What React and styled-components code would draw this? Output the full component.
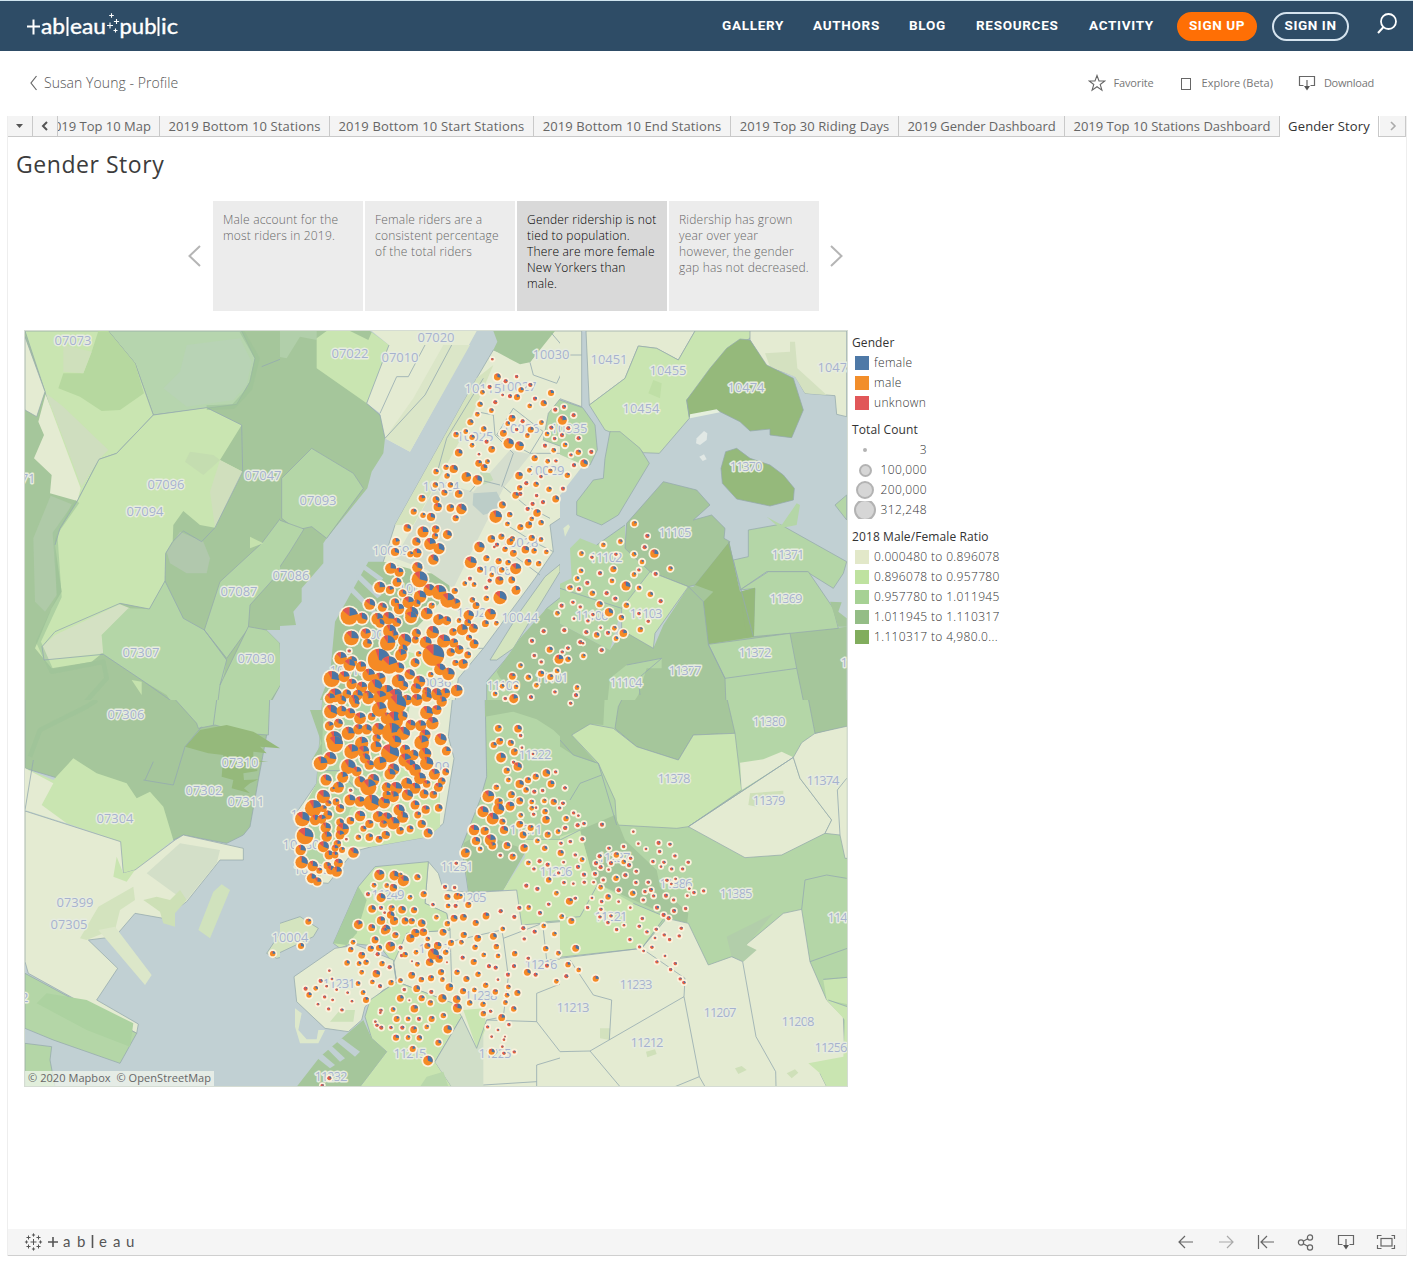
import React from "react";
import styled, { createGlobalStyle } from "styled-components";

const GlobalStyle = createGlobalStyle`
  * { box-sizing: border-box; }
  body { margin: 0; background: #fff; font-family: "Open Sans", "Noto Sans", sans-serif; color: #333; }
`;

const Page = styled.div`
  width: 1413px;
  height: 1262px;
  overflow: hidden;
  display: flex;
  flex-direction: column;
`;

const Header = styled.header`
  height: 51px;
  flex: none;
  border-top: 1px solid #cfe4ef;
  background: #2e4c66;
  display: flex;
  align-items: center;
  padding: 0 15px 0 26px;
`;

const Logo = styled.div`
  display: flex;
  align-items: center;
  height: 30px;
  margin-right: auto;
  svg { display: block; }
`;

const Nav = styled.nav`
  display: flex;
  align-items: center;
  gap: 30px;
  padding-bottom: 2px;
`;

const NavLink = styled.a`
  width: ${(p) => p.$w}px;
  color: #fff;
  font: 700 13.5px/20px Roboto, sans-serif;
  letter-spacing: 0.7px;
  white-space: nowrap;
`;

const Pill = styled.a`
  width: ${(p) => p.$w}px;
  height: 29px;
  margin-left: ${(p) => p.$gap}px;
  border-radius: 15px;
  border: 2px solid ${(p) => (p.$filled ? "#ff6f05" : "#d5e3ee")};
  background: ${(p) => (p.$filled ? "#ff6f05" : "transparent")};
  color: #fff;
  font: 700 13.5px/22px Roboto, sans-serif;
  letter-spacing: 0.6px;
  text-align: center;
  white-space: nowrap;
`;

const SearchButton = styled.span`
  display: flex;
  margin: -5px 0 0 27px;
`;

const CrumbRow = styled.div`
  height: 65px;
  flex: none;
  display: flex;
  align-items: center;
  padding: 0 39px 2px 29px;
  color: #555;
`;

const BackLink = styled.a`
  display: flex;
  align-items: center;
  gap: 6px;
  margin-right: auto;
  font: 300 14px/20px "Open Sans", sans-serif;
  letter-spacing: 0.06px;
`;

const Action = styled.a`
  display: flex;
  align-items: center;
  gap: 7px;
  margin-left: ${(p) => p.$gap ?? 0}px;
  font: 400 11px/20px "Open Sans", sans-serif;
  letter-spacing: ${(p) => p.$ls ?? 0}px;
  white-space: nowrap;
  color: #777;
`;

const Workbook = styled.main`
  width: 1400px;
  height: 1140px;
  margin-left: 7px;
  flex: none;
  border: solid #eee;
  border-width: 0 1px;
  display: flex;
  flex-direction: column;
`;

const TabStrip = styled.div`
  height: 21px;
  flex: none;
  display: flex;
  background: #f4f4f4;
`;

const TabButton = styled.div`
  width: ${(p) => p.$w}px;
  display: flex;
  align-items: center;
  justify-content: center;
  border: solid #c9c9c9;
  border-width: 0 1px 1px 0;
`;

const Tab = styled.div`
  width: ${(p) => p.$w}px;
  height: 21px;
  overflow: hidden;
  display: flex;
  justify-content: ${(p) => (p.$clip ? "flex-end" : "center")};
  padding-right: ${(p) => (p.$clip ? 8 : 0)}px;
  font: 400 13px/21px "Open Sans", sans-serif;
  letter-spacing: ${(p) => p.$ls ?? 0}px;
  white-space: nowrap;
  color: ${(p) => (p.$active ? "#333" : "#666")};
  background: ${(p) => (p.$active ? "#fff" : "#f4f4f4")};
  border: solid #c9c9c9;
  border-width: 0 1px ${(p) => (p.$active ? 0 : 1)}px 0;
`;

const TabGap = styled.div`
  width: 1px;
  background: #fff;
  border-bottom: 1px solid #c9c9c9;
`;

const Title = styled.h1`
  margin: 9px 0 1px 8px;
  font: 400 23px/36px "Open Sans", sans-serif;
  letter-spacing: 0.55px;
  color: #3c3c3c;
`;

const Story = styled.div`
  display: flex;
  align-items: center;
  margin: 18px 0 0 180px;
  height: 110px;
  flex: none;
`;

const Points = styled.div`
  display: flex;
  gap: 2px;
  margin: 0 11px 0 12px;
`;

const StoryPoint = styled.div`
  width: 150px;
  height: 110px;
  padding: 11px 0 0 10px;
  background: ${(p) => (p.$active ? "#d9d9d9" : "#ececec")};
  color: ${(p) => (p.$active ? "#000" : "#686868")};
  font: 300 12px/16px "Open Sans", sans-serif;
  letter-spacing: 0.2px;
  white-space: pre;
`;

const Dashboard = styled.div`
  display: flex;
  margin: 19px 0 0 16px;
`;

const MapPane = styled.div`
  width: 824px;
  height: 757px;
  position: relative;
  svg { display: block; }
`;

const Attribution = styled.div`
  position: absolute;
  left: 1px;
  bottom: 1px;
  height: 15px;
  padding: 0 3px;
  background: rgba(240, 245, 236, 0.75);
  font: 400 11px/14px "Open Sans", sans-serif;
  letter-spacing: 0.06px;
  color: #666;
  white-space: pre;
`;

const Legends = styled.aside`
  width: 170px;
  padding: 3px 0 0 4px;
  font: 350 12px/20px "Open Sans", sans-serif;
  color: #333;
`;

const Legend = styled.section`
  margin-bottom: 7px;
`;

const LegendTitle = styled.div`
  height: 20px;
  font-weight: 400;
  letter-spacing: 0.1px;
  color: #333;
  white-space: nowrap;
`;

const LegendRow = styled.div`
  height: 20px;
  display: flex;
  align-items: center;
  gap: 5px;
  padding-left: 3px;
  letter-spacing: 0.34px;
  white-space: nowrap;
`;

const Swatch = styled.i`
  width: 14px;
  height: 14px;
  background: ${(p) => p.$c};
`;

const SizeRow = styled.div`
  height: 20px;
  width: 75px;
  display: flex;
  align-items: center;
  justify-content: space-between;
  padding-left: 2px;
  letter-spacing: 0.4px;
`;

const SizeBox = styled.div`
  width: 22px;
  height: 18px;
  overflow: hidden;
  display: flex;
  align-items: center;
  justify-content: center;
`;

const SizeDot = styled.i`
  flex: none;
  width: ${(p) => p.$d}px;
  height: ${(p) => p.$d}px;
  border-radius: 50%;
  border: 2px solid #b3b3b3;
  background: #d6d6d6;
`;

const Footer = styled.footer`
  height: 27px;
  flex: none;
  margin-top: auto;
  background: #f5f5f5;
  border-bottom: 1px solid #cfcfcf;
  display: flex;
  align-items: center;
  padding: 0 10px 1px 16px;
`;

const FooterBrand = styled.div`
  display: flex;
  align-items: center;
  margin-right: auto;
`;

const Tools = styled.div`
  display: flex;
  gap: 20px;
`;

const CREAM = "#e4ebd2";
const LIGHT = "#c9e5b1";
const MID = "#b4d6a7";
const DARK = "#a5c69b";
const DEEP = "#95b97b";
const WATER = "#c1d0d3";
const GREY = "#d3dfc8";

// Each tile of the map: origin, size, base fill and shapes [fill, points, outlined].
const TILES = [
  { x: 20, y: 325, w: 280, base: DARK, shapes: [
    ["#b6d5ae", "265,18 665,18 705,100 690,170 650,238 400,270 345,115", 1],
    ["#b8d3b5", "500,60 660,40 695,110 680,180 640,225 500,245 430,190 480,140"],
    [LIGHT, "15,18 265,18 345,115 400,270 290,385 237,403 172,528 75,200", 1],
    ["#b6d89f", "115,190 130,145 190,145 215,80 235,18 265,18 345,115 372,205 300,255 245,258 180,215"],
    ["#cfe0bc", "130,60 215,80 190,145 130,140"],
    ["#cfdebf", "78,205 130,245 265,375 237,403 185,485"],
    [CREAM, "15,35 75,200 50,275 15,255", 1],
    [CREAM, "77,208 182,490 172,528 90,505 95,450 42,400 72,330 55,290"],
    ["#afcaa8", "92,512 155,538 105,640 110,810 75,860 45,830 40,640"],
    [LIGHT, "400,270 560,248 665,300 600,405 668,440 585,608 540,600 490,558 460,600 458,650 437,685 435,768 388,852 300,835 240,990 215,1010 95,1030 45,970 95,850 125,800 105,660 120,610 172,528 237,403 290,385"],
    ["#d0dfbd", "600,405 668,440 585,608 570,500"],
    ["#c4ddb0", "510,380 580,390 600,405 550,450 495,410"],
    ["#d4e1c3", "105,930 300,838 330,850 245,930 250,985 72,1005 66,965"],
    [MID, "435,768 490,880 553,915 620,1005 585,1170 500,1170 440,1110 365,1065 250,988 245,930 325,850 388,852"],
    [MID, "785,575 840,605 840,640 690,840 685,910 620,1000 553,915 600,770 725,655", 1],
    [MID, "840,420 782,480 785,575 840,605", 1],
    [MID, "685,905 740,915 780,955 785,1075 745,1140 745,1170 585,1170 600,1080", 1],
    [WATER, "840,830 790,880 825,905 780,915 740,915 780,955 785,1075 750,1140 750,1170 840,1170"],
    ["#b1c8ad", "440,680 480,620 550,650 570,700 560,745 500,745 450,715"],
    ["#c5e2ad", "690,635 730,655 690,670"],
    ["#c5e2ad", "335,1065 365,1070 365,1110"],
  ], lines: ["458,650 490,618 545,650 585,608", "665,300 668,440", "400,270 290,385 237,403 172,528 120,610 105,660", "400,270 560,248 665,300", "668,440 585,608", "458,650 437,685 435,768 388,852 300,835 105,920 66,965 72,1005 250,988 365,1065 500,1160", "435,768 490,880 553,915 620,1005 600,1080", "725,125 800,95 840,60"],
    bands: ["172,530 105,625 118,815 55,950 95,1040 250,1010 260,1060 180,1150 20,1165", "665,18 712,100 690,190 640,245 560,248"] },
  { x: 280, y: 325, w: 290, base: WATER, shapes: [
    [DARK, "0,18 270,18 325,60 260,235 300,270 315,340 310,385 275,440 262,490 140,640 130,655 130,715 65,790 65,830 40,860 48,900 0,905"],
    ["#b1cfaa", "0,18 110,18 110,45 60,35 20,100 0,90"],
    [LIGHT, "110,40 140,18 210,18 265,45 275,22 327,60 260,235 110,130"],
    [CREAM, "275,18 590,18 390,380 315,340 300,265 260,235 327,60"],
    ["#dbe6c8", "490,60 570,60 390,380 315,340 400,220"],
    [MID, "95,370 220,445 250,490 140,640 95,605 50,615 5,580 5,460", 1],
    [MID, "0,575 72,612 30,680 0,770", 1],
    [CREAM, "640,75 750,110 815,18 870,18 870,540 810,600 820,680 765,760 610,970 535,1060 515,1170 140,1170 160,1000 310,710 345,600 590,160", 1],
    [DARK, "640,18 825,18 750,112 720,118 640,75 652,50"],
    ["#d5e3be", "590,160 640,120 560,310 400,600 345,600"],
    [DARK, "265,710 310,710 440,745 505,745 510,800 380,940 230,1170 130,1170 110,1150 150,1050 165,890"],
    [MID, "805,265 840,222 870,240 870,385 790,345", 1],
    ["#d5dece", "690,375 752,388 670,490 520,790 440,735 345,700 475,470 580,500"],
    ["#bccdc8", "580,505 650,500 668,535 640,560 610,570 578,540"],
    ["#c5dbb7", "600,440 630,445 640,465 610,480"],
    [LIGHT, "385,980 450,1000 480,1130 520,1050 500,1170 300,1170"],
    ["#d4e4bf", "630,1005 720,860 795,755 840,718 840,740 700,970 650,1005", 1],
    ["#dce8cc", "850,620 858,605 868,600 862,625"],
    [WATER, "200,790 215,782 290,860 280,868"],
    [WATER, "225,755 240,748 305,810 292,820"],
    [WATER, "245,730 258,722 310,760 300,770"],
    [MID, "870,770 800,850 780,880 620,1070 620,1170 870,1170", 1],
    [DARK, "870,895 800,850 720,940 650,1040 660,1060 715,1090 700,1170 870,1170"],
  ], lines: ["327,60 260,235 300,270 315,340 435,210 515,60", "435,60 385,155 350,155 300,265", "750,112 760,150 830,175 870,90", "700,250 790,320 750,385 650,330 700,250", "590,260 640,270 645,330 700,385 665,485", "570,500 600,465 660,480", "870,385 750,385", "820,680 760,650 680,600", "670,485 735,540 810,580", "700,690 780,750", "815,25 870,90", "610,970 560,970", "475,430 500,340 610,160"] },
  { x: 560, y: 325, w: 288, base: WATER, shapes: [
    [CREAM, "0,18 65,18 65,245 0,210", 1],
    [MID, "0,215 68,248 105,300 112,375 90,420 60,420 0,375", 1],
    [CREAM, "0,375 70,420 0,550"],
    [CREAM, "78,18 405,18 355,105 290,70 235,63 195,160 88,240", 1],
    [LIGHT, "235,63 290,70 355,105 405,18 575,18 570,40 500,80 380,225 388,280 298,385 250,383 200,340 135,315 88,240 195,160", 1],
    ["#bfdfa6", "280,165 305,175 300,220 265,205"],
    [CREAM, "570,18 860,18 860,275 830,268 825,212 735,205 705,152 620,125 570,45", 1],
    ["#d4e1c0", "615,85 690,80 690,50 705,50 712,130 740,155 800,210 735,205 705,155 630,125"],
    [DEEP, "540,42 570,45 620,120 700,160 730,255 695,338 630,330 630,312 570,318 540,290 470,255 388,275 380,225 450,130 500,70", 1],
    ["#e5efdd", "390,268 470,253 480,262 390,280"],
    [DEEP, "530,370 497,380 483,430 487,475 530,522 630,543 700,525 703,490 670,450 630,420 570,400", 1],
    ["#e1e8e5", "410,340 432,318 442,325 440,345 420,360 408,355"],
    ["#e1e8e5", "418,395 432,388 440,403 428,408"],
    [MID, "150,320 180,320 240,370 268,415 175,570 125,600 50,570 50,530 100,465 130,460 135,400", 1],
    [MID, "195,600 195,670 270,740 185,850 150,975 0,880 0,790 35,760 30,670 60,640 110,660"],
    [DARK, "0,880 150,975 190,915 280,970 310,900 385,785 400,785 500,655 540,800 690,925 860,905 860,1170 0,1170"],
    [DARK, "310,470 410,495 450,540 400,585 455,570 495,610 492,640 510,650 405,780 385,785 270,740 195,670 200,595", 1],
    [LIGHT, "270,740 385,785 285,925 280,970 185,915 185,850", 1],
    [DEEP, "508,650 540,800 585,790 582,935 445,958 430,830 460,800 405,780"],
    [MID, "565,615 660,598 860,710 850,745 820,790 740,740 620,740 540,795 520,705 565,695", 1],
    [MID, "620,575 665,600 710,535 720,540 710,600 660,610"],
    [MID, "540,795 625,740 745,740 820,850 835,910 690,925 580,935 585,790", 1],
    [DEEP, "540,800 585,788 582,935 560,938"],
    [MID, "445,958 690,925 710,1030 745,1170 500,1170 495,1060", 1],
    [MID, "305,1000 200,1020 150,1060 135,1170 175,1170 235,1110 260,1030 305,1030"],
    [DARK, "810,830 845,832 835,860 860,880 860,905 835,905"],
    [MID, "860,510 825,540 860,585", 1],
    ["#dce8cc", "10,610 25,598 30,605 15,635"],
  ], lines: ["385,785 430,830 445,958 495,1060 710,1030", "505,650 580,935", "200,1020 305,1000", "110,660 195,600", "0,790 185,850", "240,1110 235,1060 305,1000", "0,90 65,90"] },
  { x: 20, y: 700, w: 280, base: WATER, shapes: [
    [DARK, "15,0 580,0 740,105 715,240 690,380 670,405 620,430 490,405 460,420 400,320 15,205", 1],
    [MID, "440,0 750,0 745,105 670,100 585,75 535,85 530,70", 1],
    [DEEP, "620,75 700,95 780,145 720,140 740,160 700,155 700,180 745,185 705,185 670,205 712,208 712,213 670,220 672,240 715,238 690,250 672,265 690,280 635,265 640,240 605,230 610,165 565,160 495,140 540,90"],
    [LIGHT, "15,205 100,240 160,175 230,220 320,250 350,295 390,275 430,320 460,420 345,510 310,520 302,425 140,370 15,330"],
    [CREAM, "15,205 100,250 65,315 140,370 15,330"],
    [CREAM, "15,333 302,425 310,520 345,510 465,420 490,405 670,445 670,480 600,480 500,605 430,655 345,640 285,710 205,720 293,805 230,900 355,972 350,1000 25,820 15,785", 1],
    [LIGHT, "290,470 310,520 345,510 320,545 280,530"],
    [GREY, "380,520 480,430 600,450 590,490 500,600 470,585"],
    ["#d3e3be", "235,620 340,560 345,600 300,630 285,690 250,700 200,720 180,715"],
    ["#cde0b6", "370,600 410,590 450,600 480,570 500,600 465,640 465,680 430,670 420,635"],
    ["#dce7c9", "235,690 285,680 395,825 375,855"],
    ["#d0e2bd", "605,553 630,570 570,715 535,690 580,575"],
    [MID, "15,820 350,1000 300,1090 100,1020 15,985", 1],
    ["#acd2a0", "80,880 200,900 340,970 330,1040 200,990 50,910"],
    [MID, "15,1030 95,1040 90,1080 105,1160 15,1160", 1],
    ["#d4e4bf", "740,760 800,670 840,650 840,750 770,775", 1],
  ], lines: ["370,240 460,255 495,140 545,80", "15,330 40,180", "400,185 375,240", "590,0 580,75"],
    bands: ["30,170 60,90 200,20 230,0"] },
  { x: 280, y: 700, w: 290, base: WATER, shapes: [
    [CREAM, "130,0 520,0 505,110 522,175 490,370 445,410 275,440 220,455 145,550 85,545 55,480 55,330 110,250", 1],
    [MID, "130,0 400,0 350,200 170,450 120,530 60,500 55,350 110,250"],
    [LIGHT, "350,180 480,250 480,380 445,410 275,440 180,440 210,330"],
    [DARK, "90,30 130,30 125,190 95,180 125,130"],
    [MID, "615,0 870,0 870,420 740,420 670,570 565,575 545,440 600,300 620,230", 1],
    [DARK, "615,0 870,0 870,165 820,90 770,58 700,35 615,50"],
    [DARK, "550,430 600,400 740,450 670,570 565,575"],
    [LIGHT, "735,420 870,420 870,665 725,675 710,570 670,570 735,470"],
    [CREAM, "445,485 475,520 490,570 570,578 710,570 725,675 870,660 870,1160 520,1160 465,1080 545,920 350,845 340,780 380,700 510,690 500,640 435,610", 1],
    [LIGHT, "445,485 285,500 235,560 160,730 180,745 215,730 300,740 340,790 380,700 510,690 500,640 435,610", 1],
    ["#a9cda0", "160,730 235,560 260,600 230,700 200,735"],
    [CREAM, "165,745 230,735 340,780 350,850 310,870 255,920 245,960 205,995 135,985 50,905 42,830", 1],
    [LIGHT, "350,845 520,910 545,950 465,1085 515,1160 240,1160 320,1055 275,1015 255,950 270,900", 1],
    [DARK, "250,960 275,1015 320,1055 240,1160 50,1160 120,1070"],
    [WATER, "170,1025 185,1015 240,1055 225,1070"],
    [WATER, "140,1045 152,1035 195,1075 180,1085"],
    [WATER, "100,1065 118,1055 165,1095 150,1105"],
    ["#d0dec8", "545,950 590,1045 610,980 610,1160 515,1160 465,1085"],
    ["#b9d8ab", "420,1160 440,1130 490,1115 505,1160"],
    [LIGHT, "550,930 610,925 620,980 590,1045"],
    ["#d4e4bf", "0,680 60,650 115,685 100,710 0,772", 1],
    ["#dde8cb", "45,925 65,940 55,990 80,1018 110,1018 115,990 135,990 115,1030 60,1030 45,980"],
    ["#cde2b9", "180,930 225,930 220,965 150,965"],
  ], lines: ["665,690 670,715 800,665 870,660", "670,715 685,830 670,950 620,960 590,1045 545,950", "510,690 515,850", "665,690 510,725", "545,950 465,1085", "620,960 770,965 840,1055 870,1055", "770,965 770,880 870,840", "770,1160 770,1095 870,1065", "610,1155 770,1145", "790,690 800,780 870,775", "340,790 350,850", "110,212 180,212 230,270"] },
  { x: 560, y: 700, w: 288, base: MID, shapes: [
    [DARK, "0,0 135,0 130,75 95,72 35,105 110,190 40,165 0,120"],
    [DARK, "200,0 495,0 525,100 400,105 355,180 230,140 165,85 175,20", 1],
    [LIGHT, "90,72 160,85 230,140 355,180 400,105 525,100 545,270 385,380 350,385 170,375 165,300 115,190 35,105", 1],
    [CREAM, "540,188 610,178 665,155 700,172 545,270"],
    [CREAM, "700,172 720,235 815,360 795,400 665,465 555,473 385,380", 1],
    [CREAM, "700,172 725,128 765,100 862,75 862,475 855,475 840,405 795,400 815,360 720,235", 1],
    [DARK, "740,0 870,0 870,70 765,100", 1],
    [DARK, "60,390 165,345 195,420 290,510 300,560 385,640 380,680 310,640 220,600 110,550 90,500"],
    [LIGHT, "0,420 60,390 90,500 110,550 220,610 315,650 245,745 0,775"],
    [CREAM, "0,775 245,745 320,655 385,670 445,795 515,770 670,640 725,628 750,785 800,900 850,950 855,1080 780,1120 800,1160 0,1160", 1],
    ["#b2ceaa", "500,710 560,680 640,640 560,735 590,750 550,785 515,770"],
    [LIGHT, "790,840 870,830 870,920 800,900"],
    [LIGHT, "745,1090 850,1070 855,960 800,900 870,930 870,1160 800,1160 780,1120"],
    ["#d3e2be", "120,985 150,985 150,1020 120,1015"],
    ["#cfe0b9", "570,280 670,272 670,282 590,295 590,320 565,315"],
    ["#cfe0b9", "525,1105 545,1098 560,1110 535,1122"],
    ["#cfe0b9", "680,1120 705,1108 715,1118 695,1135"],
    ["#cfe0b9", "258,1055 285,1048 290,1062 262,1072"],
  ], lines: ["0,120 40,165 115,190 170,375", "125,225 60,250 30,300", "385,380 700,172", "245,745 375,835 372,890 90,1053 0,1055", "90,1053 180,1160", "30,780 100,885 155,900 148,1020", "372,890 418,1130 345,1160", "418,1130 435,1160", "515,770 548,785 588,1010 647,1115 648,1160", "725,628 735,540 800,525 860,535", "750,785 862,745", "790,838 862,832", "860,235 832,270 840,405", "0,655 60,650 115,550", "0,420 60,390", "220,610 315,650 245,745 0,775", "805,900 862,920"] },
];

const DOTS = [
  [280, 325, `637,103,3 652,156,9 677,169,5 710,155,4 751,180,5 723,195,7 629,186,5 607,202,6 668,210,3 690,214,5 711,217,8 765,221,5 813,204,8 646,232,5 600,238,7 634,257,6 749,243,6 791,235,8 852,246,5 826,254,5 592,268,6 571,292,8 696,280,9 728,289,5 683,296,6 784,293,6 847,286,12 611,312,7 557,320,6 528,329,7 670,325,9 710,314,4 752,314,8 742,332,6 814,308,5 801,327,6 846,331,5 824,341,4 576,337,7 576,361,6 620,350,5 686,355,14 718,363,12 635,373,9 536,383,10 597,388,3 795,362,5 821,376,6 855,360,6 865,310,5 764,400,8 803,409,6 828,408,4 596,415,9 622,410,6 612,428,9 498,427,7 521,432,11 468,440,7 748,436,6 811,438,6 501,453,7 717,452,10 559,456,13 592,465,13 783,455,4 862,451,7 466,480,7 511,480,7 719,489,7 739,475,5 768,478,7 807,493,7 849,491,5 493,503,8 536,507,10 426,520,9 468,524,9 707,511,9 721,507,5 770,512,4 827,522,9 789,532,5 758,537,5 667,540,9 473,546,11 511,549,10 544,552,14 743,552,5 401,560,8 429,571,7 453,576,11 527,580,8 771,564,10 689,569,7 647,575,17 755,582,6 783,593,7 682,597,6 746,600,9 721,607,8 382,609,10 429,621,15 467,613,10 502,629,12 465,634,8 348,650,10 409,650,11 634,642,10 664,635,8 697,642,7 755,639,8 783,644,6 690,650,9 651,659,5 643,666,3 450,657,16 477,671,15 598,666,14 675,673,7 700,685,9 736,674,10 762,678,7 799,681,6 345,681,11 411,684,12 391,688,8 460,704,14 572,712,16 619,700,8 656,709,8 684,713,7 744,712,9 776,716,7 412,727,14 332,730,15 357,742,12 600,734,8 665,735,7 707,731,15 635,750,6 419,763,22 351,772,12 570,761,5 554,776,6 582,779,6 658,767,11 695,765,9 629,767,5 299,787,15 330,795,11 524,798,8 619,788,5 708,796,12 368,805,10 448,795,16 477,802,20 660,818,18 420,815,17 503,826,20 526,836,14 577,825,7 588,842,9 619,820,7 269,838,15 345,833,11 385,832,16 410,835,10 307,847,12 357,852,14 455,842,8 395,865,18 440,866,16 208,873,24 246,880,15 325,880,17 292,882,16 350,892,12 566,871,14 631,868,15 476,884,15 500,887,12 393,877,16 537,887,6 563,893,9 616,896,9 649,895,6 300,895,12 580,910,12 547,914,15 519,921,10 458,922,17 329,918,18 257,926,14 409,925,12 214,939,20 340,932,14 374,946,18 262,955,12 323,954,21 406,945,9 437,952,16 491,948,18 521,954,12 567,938,8 582,957,12 537,974,12 369,972,12 512,982,11 208,978,4 363,990,16 460,990,30 416,987,7 182,1000,17 297,1005,31 563,990,9 215,1010,15 405,1013,12 208,1020,16 243,1025,14 327,1020,24 357,1028,14 526,1014,8 549,1017,13 480,1033,16 505,1047,17 266,1050,17 389,1048,14 155,1062,22 192,1055,15 298,1062,17 452,1049,7 355,1068,18 215,1077,14 370,1082,13 418,1070,16 245,1087,15 285,1085,20 408,1090,14 530,1097,16 165,1111,19 200,1107,12 262,1113,14 320,1102,20 350,1108,15 470,1106,15 495,1105,14 440,1100,12 233,1110,14 868,788,5 845,842,5 832,865,6 791,919,5 853,916,5 756,948,5 809,974,8 837,1003,12 864,1003,7 847,981,4 763,992,4 784,1011,4 721,1022,6 864,969,4 697,1054,9 745,1057,7 783,1046,8 811,1056,8 831,1038,6 666,1084,6 708,1086,6 769,1081,6 645,1107,6 676,1121,4 701,1121,12 753,1117,5 825,1101,4`],
  [280, 700, `150,-5,14 185,0,12 222,0,14 265,-5,16 300,-8,18 345,-10,20 380,0,14 410,0,16 440,-10,14 470,-15,14 485,5,14 153,35,19 185,33,14 210,40,14 240,55,16 225,10,12 275,50,10 298,28,20 350,12,26 320,55,16 342,62,25 368,48,13 440,38,18 470,30,13 148,78,12 175,70,12 205,100,18 235,88,14 260,88,14 295,88,17 335,98,27 370,100,18 392,75,14 422,77,15 457,70,17 162,118,22 165,132,22 245,130,18 290,115,11 288,140,15 215,155,20 330,160,25 345,125,17 435,105,15 425,128,20 482,118,16 499,153,12 375,150,14 400,165,14 435,162,17 250,155,16 255,175,14 150,175,17 122,190,19 375,180,18 440,190,18 268,195,13 300,190,18 205,200,20 390,195,15 405,210,16 340,208,16 330,222,15 230,215,13 188,232,15 138,240,15 420,235,16 463,223,15 497,216,9 485,244,10 475,262,12 240,245,15 280,240,16 175,262,15 265,262,22 380,250,15 405,265,15 440,252,10 320,262,13 348,265,17 340,290,15 382,285,15 432,282,12 460,284,10 158,268,7 212,271,4 130,290,18 100,325,23 67,357,20 210,300,15 240,305,14 275,308,22 312,308,16 320,285,11 168,306,9 145,310,8 405,315,12 437,329,11 476,324,10 180,325,11 130,326,9 357,330,15 143,345,12 105,360,14 125,358,12 211,362,10 240,348,14 295,350,15 320,355,16 368,352,15 413,345,9 180,367,10 137,383,14 188,388,17 268,372,11 250,386,8 340,370,17 310,372,10 425,372,11 390,387,9 360,392,10 444,399,12 75,408,23 140,410,14 180,405,12 317,405,11 297,418,9 268,412,10 235,412,7 199,418,3 172,432,10 130,440,15 62,450,14 165,445,9 186,450,8 220,458,14 147,465,12 165,465,9 65,487,17 98,498,14 175,490,12 142,497,10 152,510,12 170,515,14 118,512,8 95,535,13 112,545,11 655,85,9 714,86,10 722,107,4 659,124,9 692,129,8 641,135,8 726,143,3 703,156,9 759,162,3 663,173,13 701,187,4 713,200,11 680,212,8 827,216,4 799,219,10 767,230,8 685,240,6 744,241,8 719,252,11 813,252,9 649,262,7 738,270,7 763,275,5 788,272,4 855,264,4 694,284,9 625,289,16 656,307,11 719,303,9 755,306,6 793,303,6 821,306,8 849,310,4 690,319,12 656,327,15 609,335,15 755,325,6 768,323,3 839,324,4 795,335,7 761,343,4 722,346,6 638,356,16 798,359,10 667,365,8 858,356,4 719,373,9 752,384,8 855,385,4 582,390,14 614,393,11 672,390,11 834,395,6 803,404,8 729,405,9 588,423,11 631,420,15 637,437,10 681,437,9 772,423,6 732,444,10 600,447,6 843,430,4 556,459,12 794,445,7 842,459,8 661,466,4 698,470,8 529,490,4 745,489,6 779,484,5 851,487,3 803,494,5 762,507,4 836,519,4 806,540,7 852,548,4 739,557,5 772,567,5 829,580,6 867,604,8 806,613,4 718,624,5 746,623,6 780,639,5 845,650,5 703,651,5 298,525,14 343,527,13 370,542,15 361,525,6 412,532,8 282,556,6 320,557,6 340,563,10 495,561,5 524,563,4 264,583,5 303,593,12 390,592,6 431,583,8 502,591,8 531,589,9 540,589,7 459,614,4 504,618,6 527,618,5 565,615,8 276,627,10 303,624,5 335,625,8 366,629,10 402,631,8 314,638,3 332,645,10 662,634,5 303,662,11 342,663,11 375,663,9 395,664,8 469,652,6 522,655,9 550,652,9 618,648,9 425,670,10 587,669,8 502,671,7 235,674,12 275,683,9 318,688,12 313,693,9 668,687,6 730,685,5 791,678,6 764,695,5 823,702,6 406,699,11 430,697,10 489,697,9 346,706,8 391,715,11 443,717,6 551,705,8 593,715,9 640,709,9 285,720,9 733,717,4 513,729,8 544,727,6 219,727,6 331,740,13 297,744,8 272,746,8 362,743,5 442,738,8 473,737,10 585,742,7 649,740,7 797,746,7 212,749,7 408,757,6 460,762,15 497,757,7 704,761,7 835,760,6 293,763,5 245,766,9 365,767,4 375,764,7 611,765,6 654,768,6 548,773,5 745,775,4 477,777,10 396,784,2 449,787,10 581,786,8 501,787,2 201,789,7 258,787,7 306,791,7 237,791,6 412,793,6 627,799,5 647,803,5 702,799,5 801,797,5 865,794,5 329,802,5 148,812,3 245,817,6 289,821,10 483,817,8 531,817,7 742,817,9 767,824,5 594,823,7 684,824,5 860,829,3 395,826,9 453,835,8 559,837,8 424,839,7 487,839,6 122,843,5 156,837,3 277,846,6 333,848,7 361,842,6 654,839,3 829,844,6 234,851,6 300,859,5 77,866,5 107,865,6 140,859,3 508,862,10 617,856,7 685,861,6 170,869,3 373,869,4 410,866,9 549,874,8 583,870,6 203,878,3 249,878,6 454,876,5 646,876,7 712,879,8 87,885,7 134,891,4 681,886,6 361,895,9 425,895,8 487,895,11 530,898,10 158,900,3 258,900,8 388,901,2 216,904,3 451,909,7 569,909,7 676,908,6 609,913,7 114,913,3 532,924,12 403,926,10 146,927,4 186,930,4 303,931,4 301,938,3 339,929,6 632,934,4 610,941,7 701,927,7 490,947,7 665,953,9 350,957,8 384,957,6 417,957,5 455,957,8 286,965,3 291,976,4 304,983,5 333,983,4 367,983,5 440,981,6 401,989,9 503,988,11 623,981,4 687,974,4 654,990,3 348,1013,8 384,1013,6 418,1014,7 635,1010,3 675,1010,2 672,1019,3 475,1028,8 667,1040,3 398,1047,8 635,1055,8 672,1060,4 703,1056,4 444,1082,13 148,1135,5 127,1157,4 85,665,8 63,738,8 -22,761,7`],
  [560, 325, `41,271,5 56,340,5 55,382,7 94,381,5 72,415,10 42,421,5 33,390,4 223,596,7 262,633,5 181,650,6 130,660,6 254,667,5 64,686,6 168,688,4 222,688,6 283,686,11 96,697,4 246,711,6 331,731,6 160,733,8 237,735,4 63,738,6 120,745,5 222,749,6 287,747,5 51,761,6 82,774,5 156,768,6 198,783,12 31,788,6 57,793,5 237,789,6 97,805,7 140,805,5 271,808,7 166,821,5 302,829,5 39,832,4 119,838,8 199,841,7 61,846,4 147,862,11 237,866,4 99,869,4 184,878,7 42,881,3 84,888,4 265,889,4 122,908,3 163,910,6 241,914,7 79,922,5 144,924,5 190,925,10 110,930,7 168,941,6 61,952,5 69,955,3 125,976,5 70,993,6 51,1088,6 48,1111,5 32,1135,4 24,970,4`],
  [560, 700, `15,264,4 9,310,4 18,356,7 41,339,4 55,347,3 16,384,5 53,376,5 72,371,4 126,374,5 220,395,3 67,418,5 31,425,4 235,431,3 296,429,5 330,433,4 258,447,3 191,440,4 147,445,4 299,455,4 169,465,7 46,465,4 119,469,5 345,468,4 212,475,4 66,479,6 108,490,5 153,490,5 191,486,6 207,496,5 279,485,4 312,487,4 303,500,3 385,487,4 122,502,5 335,507,4 368,507,4 146,509,3 54,501,5 229,514,4 105,522,5 72,524,5 196,526,5 168,535,7 130,540,4 347,537,3 73,547,4 101,547,3 12,548,3 40,551,3 228,548,4 265,547,4 321,541,4 334,552,3 122,562,6 176,571,5 273,570,5 255,575,4 388,566,3 402,578,4 431,573,4 218,580,7 281,588,4 318,587,5 382,587,3 144,591,7 96,594,3 29,604,9 46,595,4 250,600,4 341,600,4 125,605,4 176,605,3 83,623,4 211,623,3 291,623,5 123,628,4 377,626,4 342,633,5 5,650,6 34,663,8 153,648,4 120,651,4 311,645,5 326,655,5 247,656,4 144,668,4 192,676,3 238,679,4 170,689,4 364,685,4 289,688,4 261,696,4 313,705,4 358,708,4 285,714,3 210,719,4 329,719,4 47,745,9 239,741,4 276,742,4 251,753,3 315,768,3 24,794,7 291,786,4 346,791,4 332,809,4 56,810,6 19,829,5 107,836,8 361,837,4 372,848,4`],
];

const PIES = DOTS.flatMap(([ox, oy, list]) =>
  list.split(" ").map((t) => {
    const [x, y, r] = t.split(",").map(Number);
    return { x: ox + x / 3, y: oy + y / 3, r: r * 0.355 + 0.2 };
  })
);

// Shapes that reach the side of a tile run past it, so that no outline shows at the join.
function bleed(points, w) {
  return points
    .split(" ")
    .map((p) => {
      const [x, y] = p.split(",").map(Number);
      const bx = x === 0 ? -30 : x >= w * 3 ? x + 30 : x;
      const by = y === 0 ? -30 : y === 1170 ? 1200 : y;
      return `${bx},${by}`;
    })
    .join(" ");
}

const ZIPS = `07073,73,340 07022,350,353 07020,436,337 07010,400,357 10030,551,354 10451,609,359 10455,668,370 10474,746,387 10454,641,408 10473,836,367 07096,166,484 07094,145,511 07047,263,475 07093,318,500 07086,291,575 07087,239,591 07307,141,652 07030,256,658 07306,126,714 07310,240,762 07302,204,790 07311,246,801 07304,115,818 07399,75,902 07305,69,924 10004,290,937 10027,518,386 10115,483,388 10025,475,436 10026,521,428 10035,569,428 10029,546,470 10024,441,486 10069,391,550 10028,520,542 10065,500,570 10019,417,588 10021,475,612 10044,520,617 11105,675,532 11102,606,557 11106,592,615 11103,646,613 11101,552,677 11109,503,685 11104,626,682 11377,685,670 11371,788,554 11369,786,598 11372,755,652 11370,746,466 11368,857,662 11380,769,721 11222,535,754 11378,674,778 11379,769,800 11374,823,780 11206,556,871 11237,614,857 11386,676,883 11385,736,893 11221,611,916 11211,526,829 11251,457,866 11205,470,897 11249,388,894 11216,541,964 11231,339,983 11238,481,995 11217,435,948 11213,573,1007 11233,636,984 11207,720,1012 11208,798,1021 11212,647,1042 11225,495,1053 11215,410,1053 11232,331,1076 11256,831,1047 11421,844,917 07071,17,478 07002,10,997 10007,309,814 10280,301,844 10005,312,869 10009,431,766 10001,380,634 10036,433,682 10018,348,670`
  .split(" ").map((t) => t.split(","));

function wedge(x, y, r, from, to) {
  const p = (f) => {
    const a = f * Math.PI * 2 - Math.PI / 2;
    return `${(x + r * Math.cos(a)).toFixed(2)},${(y + r * Math.sin(a)).toFixed(2)}`;
  };
  return `M${x},${y}L${p(from)}A${r},${r} 0 0 1 ${p(to)}Z`;
}

function Pie({ x, y, r, i }) {
  const small = r < 2.3;
  const blue = 0.2 + ((i * 7) % 10) / 80;
  const red = small ? 0.3 : 0.04 + ((i * 13) % 9) / 80;
  return (
    <g>
      <circle cx={x} cy={y} r={r} fill={small ? "#e0643c" : "#f58a25"} />
      <path d={wedge(x, y, r, 0, blue)} fill="#4a76a6" />
      <path d={wedge(x, y, r, 1 - red, 1)} fill="#df5556" />
    </g>
  );
}

function CityMap() {
  return (
    <svg width="824" height="757" viewBox="24 330 824 757">
      {TILES.map((t) => (
        <svg key={`${t.x}-${t.y}`} x={t.x} y={t.y} width={t.w} height={t.y === 325 ? 375 : 390} viewBox={`0 0 ${t.w * 3} ${t.y === 325 ? 1125 : 1170}`}>
          <rect width={t.w * 3} height="1170" fill={t.base} />
          {t.shapes.map(([fill, pts, edge], i) => (
            <polygon key={i} points={bleed(pts, t.w)} fill={fill} stroke={edge ? "#94a9ac" : "none"} strokeWidth="2.2" />
          ))}
          {(t.bands || []).map((b) => (
            <polyline key={b} points={b} fill="none" stroke="#9dc397" strokeWidth="14" opacity="0.6" strokeLinejoin="round" />
          ))}
          {t.lines.map((l) => (
            <polyline key={l} points={l} fill="none" stroke="#94a9b0" strokeWidth="2.4" />
          ))}
        </svg>
      ))}
      <g fontFamily="'Open Sans', sans-serif" fontSize="13" textAnchor="middle" fill="#a6b2cf" stroke="#e6ecdf" strokeWidth="2.8" paintOrder="stroke" strokeLinejoin="round">
        {ZIPS.map(([z, x, y]) => (
          <text key={z} x={x} y={Number(y) + 4.5} textLength={z.startsWith("11") ? 33 : 37}>{z}</text>
        ))}
      </g>
      <g fill="#faf1dd">
        {PIES.map((p, i) => <circle key={i} cx={p.x} cy={p.y} r={p.r + 1.8} />)}
      </g>
      {PIES.map((p, i) => <Pie key={i} {...p} i={i} />)}
      <rect x="24.5" y="330.5" width="823" height="756" fill="none" stroke="#d5dcd3" />
    </svg>
  );
}

const Plus = ({ x, y, s }) => <path d={`M${x - s},${y}H${x + s}M${x},${y - s}V${y + s}`} />;

const PublicLogo = () => (
  <svg width="154" height="34" viewBox="26 8 154 34" fill="none" stroke="#fff" strokeWidth="2">
    <path d="M27 25.500H40M33.500 18.500V33.500M67.500 16V35M158.500 16V35" />
    <g strokeWidth="1.1">
      <Plus x={111.500} y={14.500} s={2.3} />
      <Plus x={116.500} y={20.500} s={2.6} />
      <Plus x={110} y={24.500} s={3} />
      <Plus x={115.500} y={29.500} s={2} />
    </g>
    <g fill="#fff" stroke="#fff" strokeWidth="0.4" fontFamily="Lato, sans-serif" fontSize="22">
      <text x="41" y="33" textLength="24" lengthAdjust="spacingAndGlyphs">ab</text>
      <text x="70" y="33" textLength="36" lengthAdjust="spacingAndGlyphs">eau</text>
      <text x="119.500" y="33" textLength="37" lengthAdjust="spacingAndGlyphs">pub</text>
      <text x="161" y="33" textLength="17" lengthAdjust="spacingAndGlyphs">ic</text>
    </g>
  </svg>
);

const FooterLogo = () => (
  <svg width="112" height="20" viewBox="0 0 112 20" fill="none" stroke="#555" strokeWidth="1">
    <Plus x={9.500} y={10} s={3} />
    <Plus x={9.500} y={3} s={1.6} />
    <Plus x={9.500} y={17} s={1.6} />
    <Plus x={2.500} y={10} s={1.6} />
    <Plus x={16.500} y={10} s={1.6} />
    <Plus x={4.500} y={5.500} s={2} />
    <Plus x={14.500} y={5.500} s={2} />
    <Plus x={4.500} y={14.500} s={2} />
    <Plus x={14.500} y={14.500} s={2} />
    <path d="M24 10H34M29 5V15M68.500 3V16" strokeWidth="1.6" />
    <g fill="#555" stroke="none" fontFamily="Lato, sans-serif" fontSize="15">
      <text x="39" y="15">a</text>
      <text x="53" y="15">b</text>
      <text x="75" y="15">e</text>
      <text x="89" y="15">a</text>
      <text x="102" y="15">u</text>
    </g>
  </svg>
);

const Icon = ({ w = 20, h = 20, c = "#666", sw = 1.2, children }) => (
  <svg width={w} height={h} viewBox={`0 0 ${w} ${h}`} fill="none" stroke={c} strokeWidth={sw}>{children}</svg>
);

const DownloadGlyph = () => (
  <>
    <path d="M6.500 12.500H2.500V3.500H17.500V12.500H13.500M10 7V14" />
    <path d="M7 13H13L10 17.500Z" fill="#555" stroke="none" />
  </>
);

const TABS = [
  ["2019 Top 10 Map", 102, 0], ["2019 Bottom 10 Stations", 170, 0.14], ["2019 Bottom 10 Start Stations", 204, 0.16],
  ["2019 Bottom 10 End Stations", 197, 0.12], ["2019 Top 30 Riding Days", 168, 0.07], ["2019 Gender Dashboard", 166, -0.03],
  ["2019 Top 10 Stations Dashboard", 215, 0], ["Gender Story", 99, 0.14],
];

const POINTS = [
  "Male account for the\nmost riders in 2019.",
  "Female riders are a\nconsistent percentage\nof the total riders",
  "Gender ridership is not\ntied to population.\nThere are more female\nNew Yorkers than\nmale.",
  "Ridership has grown\nyear over year\nhowever, the gender\ngap has not decreased.",
];

export default function App() {
  return (
    <Page>
      <GlobalStyle />
      <Header>
        <Logo><PublicLogo /></Logo>
        <Nav>
          <NavLink $w={61}>GALLERY</NavLink>
          <NavLink $w={66}>AUTHORS</NavLink>
          <NavLink $w={37}>BLOG</NavLink>
          <NavLink $w={83}>RESOURCES</NavLink>
          <NavLink $w={63}>ACTIVITY</NavLink>
        </Nav>
        <Pill $filled $w={80} $gap={25}>SIGN UP</Pill>
        <Pill $w={77} $gap={15}>SIGN IN</Pill>
        <SearchButton>
          <Icon w={22} h={24} c="#fff" sw={1.8}><circle cx="12.500" cy="9.500" r="7.500" /><path d="M7.500 15L2 21" strokeWidth="2" /></Icon>
        </SearchButton>
      </Header>
      <CrumbRow>
        <BackLink><Icon w={9} h={16}><path d="M7.500 1L2 8L7.500 15" /></Icon>Susan Young - Profile</BackLink>
        <Action $ls={-0.15}><Icon w={18} h={18} sw={1.1}><path d="M9 1.500L11 7H16.800L12.200 10.500L13.900 16.200L9 12.700L4.100 16.200L5.800 10.500L1.200 7H7Z" /></Icon>Favorite</Action>
        <Action $gap={27}><Icon w={14} h={16} sw={1}><rect x="0.500" y="3.500" width="9" height="11" /></Icon>Explore (Beta)</Action>
        <Action $gap={24} $ls={-0.25}><Icon w={20} h={20}><DownloadGlyph /></Icon>Download</Action>
      </CrumbRow>
      <Workbook>
        <TabStrip>
          <TabButton $w={25}><Icon w={9} h={6}><path d="M0 1H7L3.500 5Z" fill="#555" stroke="none" /></Icon></TabButton>
          <TabButton $w={25}><Icon w={8} h={10} sw={2} c="#555"><path d="M6 1L2 5L6 9" /></Icon></TabButton>
          {TABS.map(([name, w, ls], i) => (
            <Tab key={name} $w={w} $ls={ls} $clip={i === 0} $active={i === 7}>{name}</Tab>
          ))}
          <TabGap />
          <TabButton $w={26}><Icon w={8} h={10} sw={1.6} c="#aaa"><path d="M2 1L6 5L2 9" /></Icon></TabButton>
        </TabStrip>
        <Title>Gender Story</Title>
        <Story>
          <Icon w={13} h={24} c="#b5b5b5" sw={2}><path d="M12 2L1.500 12L12 22" /></Icon>
          <Points>
            {POINTS.map((text, i) => <StoryPoint key={text} $active={i === 2}>{text}</StoryPoint>)}
          </Points>
          <Icon w={13} h={24} c="#b5b5b5" sw={2}><path d="M1 2L11.500 12L1 22" /></Icon>
        </Story>
        <Dashboard>
          <MapPane>
            <CityMap />
            <Attribution>© 2020 Mapbox  © OpenStreetMap</Attribution>
          </MapPane>
          <Legends>
            <Legend>
              <LegendTitle>Gender</LegendTitle>
              <LegendRow><Swatch $c="#4e79a7" />female</LegendRow>
              <LegendRow><Swatch $c="#f28e2b" />male</LegendRow>
              <LegendRow><Swatch $c="#e15759" />unknown</LegendRow>
            </Legend>
            <Legend>
              <LegendTitle>Total Count</LegendTitle>
              {[[4, "3"], [13, "100,000"], [18, "200,000"], [22, "312,248"]].map(([d, n]) => (
                <SizeRow key={n}><SizeBox><SizeDot $d={d} /></SizeBox>{n}</SizeRow>
              ))}
            </Legend>
            <Legend>
              <LegendTitle>2018 Male/Female Ratio</LegendTitle>
              {[["#e2e8c9", "0.000480 to 0.896078"], ["#bfe2a0", "0.896078 to 0.957780"], ["#a6d194", "0.957780 to 1.011945"], ["#94bd86", "1.011945 to 1.110317"], ["#81ad5d", "1.110317 to 4,980.0..."]].map(([c, n]) => (
                <LegendRow key={n}><Swatch $c={c} />{n}</LegendRow>
              ))}
            </Legend>
          </Legends>
        </Dashboard>
        <Footer>
          <FooterBrand><FooterLogo /></FooterBrand>
          <Tools>
            <Icon><path d="M17 10H3M9 4L3 10L9 16" /></Icon>
            <Icon c="#aaa"><path d="M3 10H17M11 4L17 10L11 16" /></Icon>
            <Icon><path d="M2.500 3V17M18 10H5M11 4L5 10L11 16" /></Icon>
            <Icon><circle cx="5" cy="10.500" r="2.600" /><circle cx="14" cy="5.500" r="2.600" /><circle cx="14" cy="15.500" r="2.600" /><path d="M7.300 9.200L11.700 6.800M7.300 11.800L11.700 14.200" /></Icon>
            <Icon><DownloadGlyph /></Icon>
            <Icon><rect x="5" y="6.500" width="11" height="7.500" /><path d="M1.500 7V3.500H5.500M15.500 3.500H18.500V7M18.500 13V16.500H15.500M5.500 16.500H1.500V13" /></Icon>
          </Tools>
        </Footer>
      </Workbook>
    </Page>
  );
}
